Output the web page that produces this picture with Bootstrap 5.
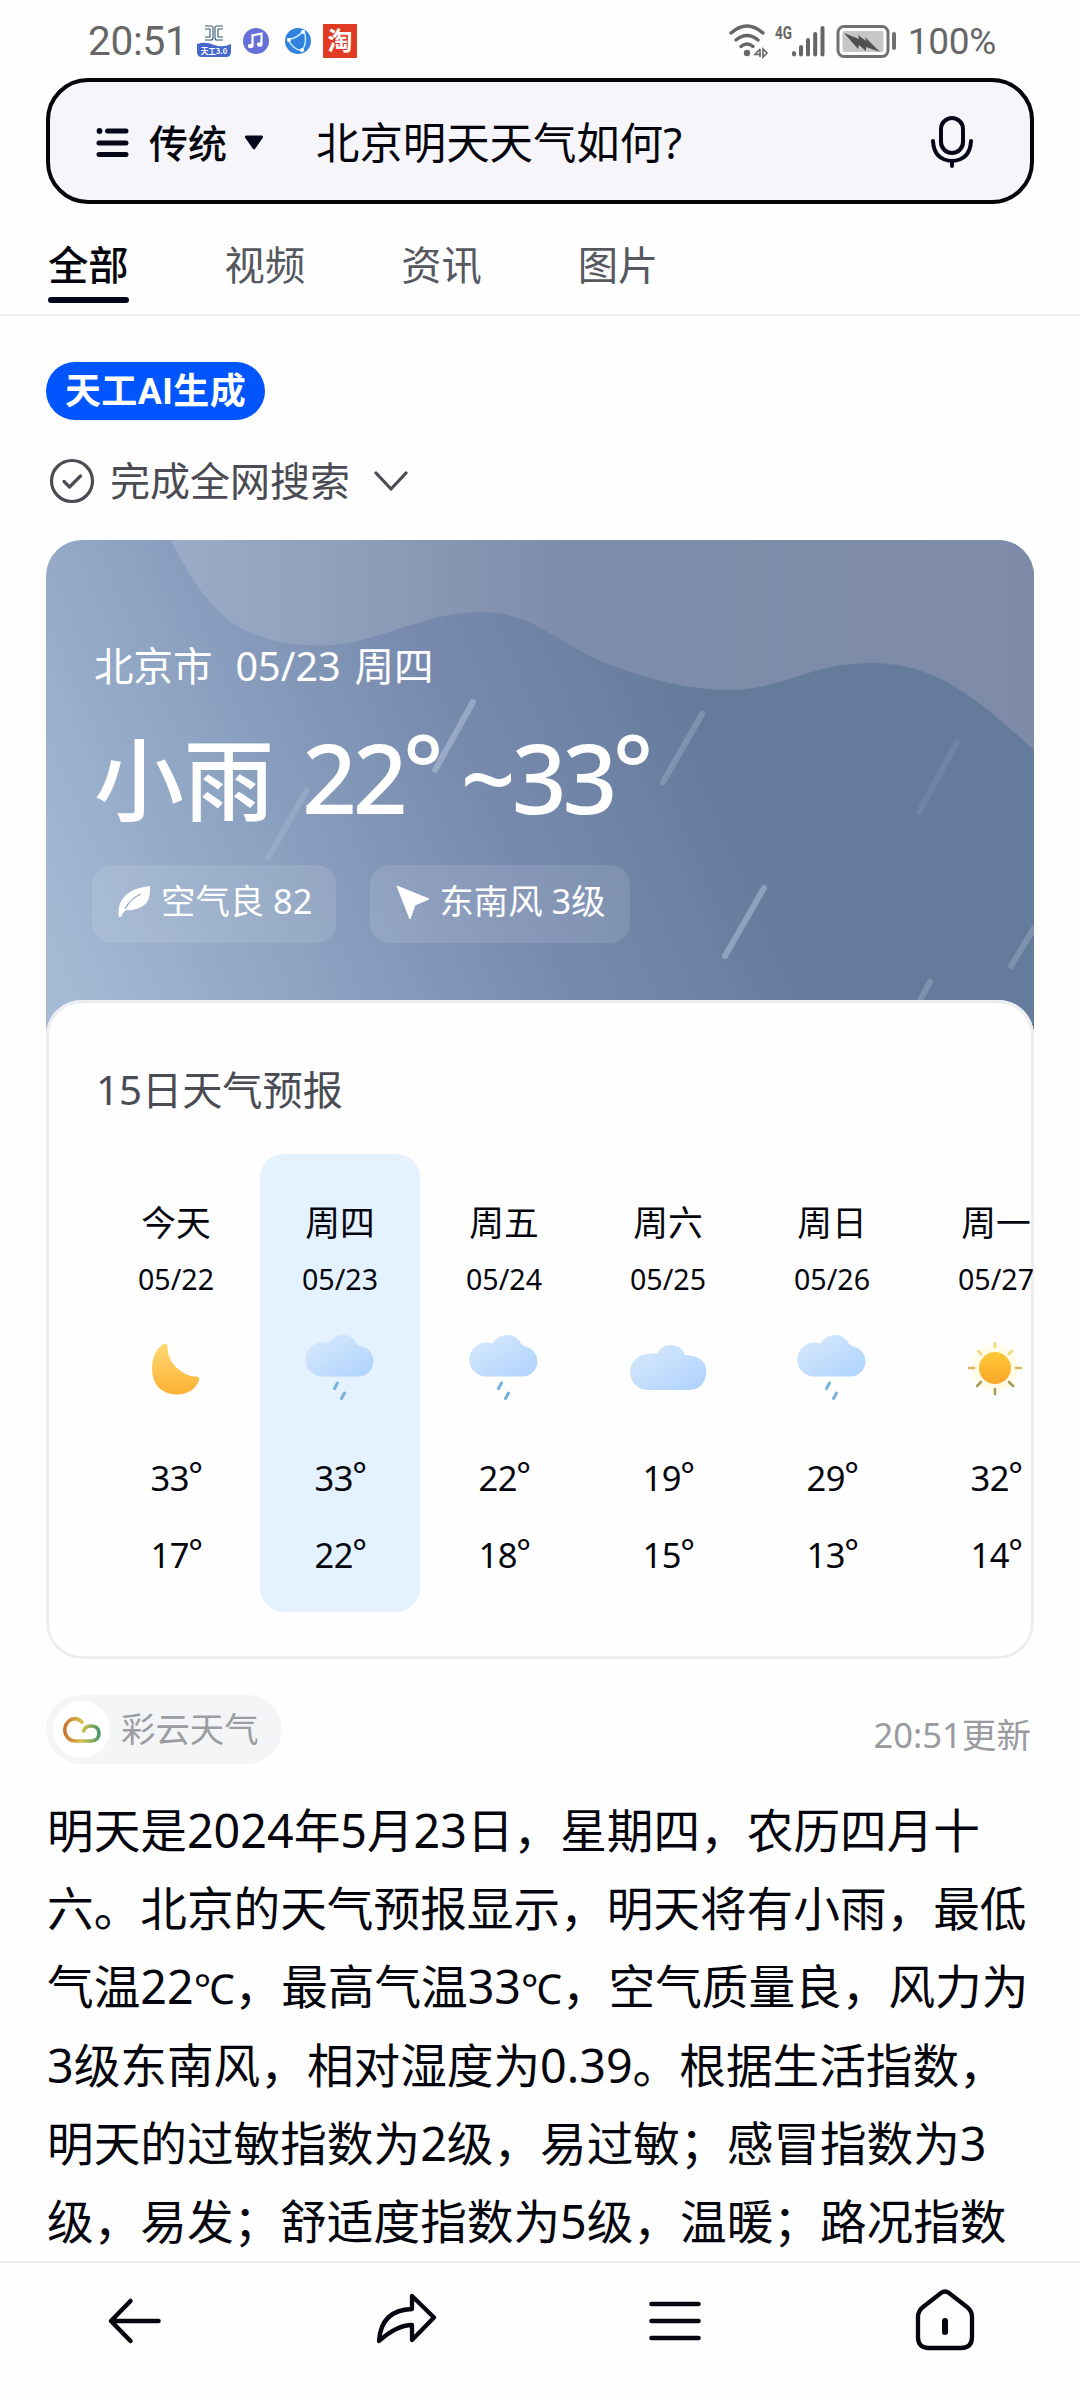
<!DOCTYPE html>
<html lang="zh-CN">
<head>
<meta charset="utf-8">
<meta name="viewport" content="width=device-width, initial-scale=1">
<title>北京明天天气如何?</title>
<link href="https://cdn.jsdelivr.net/npm/bootstrap@5.3.0/dist/css/bootstrap.min.css" rel="stylesheet">
<style>
  body { font-family: "Noto Sans", "Noto Sans CJK SC", sans-serif; background: #fefefe; color: #05060d; line-height: 1; }
  svg { display: block; flex: none; }
  .screen { width: 1080px; height: 2400px; }
  .status-bar { height: 78px; padding: 4px 84px 0 88px; color: #666; font-family: Roboto, "Noto Sans CJK SC", sans-serif; }
  .clock-text { font-size: 40.5px; width: 109px; padding-top: 1px; letter-spacing: -.3px; }
  .battery-text { font-size: 37px; margin-left: 11px; letter-spacing: -.3px; padding-top: 1px; }
  .search-box { height: 126px; margin: 0 46px; padding: 3px 57px 0 46px; border: 4px solid #05050a; border-radius: 42px; background: #f5f5fa; }
  .mode-text { font-size: 39px; font-weight: 500; margin-left: 20px; }
  .query-text { font-size: 43.4px; margin-left: 51px; }
  .tab-bar { height: 112px; padding: 0 48px; border-bottom: 2px solid #efefef; gap: 96px; font-size: 40.3px; color: #55585f; }
  .tab-item { height: 99px; padding: 31px 0 0; line-height: 60px; border-bottom: 6px solid transparent; color: inherit; }
  .tab-item.active { color: #05060d; font-weight: 500; position: relative; }
  .tab-item.active::after { content: ""; position: absolute; left: 0; right: 0; bottom: -6px; height: 6px; border-radius: 3px; background: #04061a; }
  .result { padding: 46px 46px 0; }
  .ai-badge { width: 219px; height: 58px; background: #0055ff; font-family: Roboto, "Noto Sans CJK SC", sans-serif; font-size: 36px; line-height: 61px; font-weight: 700; letter-spacing: .4px; }
  .search-state { height: 44px; margin: 39px 0 37px; font-size: 40px; color: #4a4b53; gap: 14px; padding-left: 2px; }
  .weather { height: 1119px; border-radius: 36px; }
  .sky { position: absolute; left: 0; top: 0; }
  .hero { height: 460px; padding: 101px 48px 0; }
  .hero-place { font-size: 39.5px; line-height: 50px; }
  .hero-place .gap-wide { margin-left: 23px; margin-right: 14px; }
  .hero-temp { font-size: 90px; font-weight: 500; line-height: 110px; height: 112px; margin-top: 31px; white-space: pre; }
  .hero-temp .num { font-size: 96px; letter-spacing: -4px; margin-left: 7px; }
  .hero-temp .o { margin-left: -1px; }
  .chips { margin-top: 31px; margin-left: -2px; gap: 34px; }
  .chip { height: 78px; border-radius: 20px; background: rgba(255,255,255,.11); font-size: 34.4px; padding: 0 24px 6px 25px; }
  .forecast { height: 659px; border-radius: 36px; background: #fefefe; box-shadow: inset 0 0 0 3px #ededef, inset 0 3px 0 #e6eefa; padding-top: 65px; }
  .forecast-title { font-size: 40.2px; line-height: 50px; color: #4a4b53; padding-left: 50px; }
  .days { margin-top: 39px; padding-left: 50px; gap: 4px; }
  .day { width: 160px; height: 458px; flex: none; border-radius: 24px; padding-top: 49px; }
  .day.chosen { background: #e4f1fe; }
  .day-name { font-size: 34.8px; line-height: 40px; }
  .day-date { font-size: 28.6px; line-height: 36px; margin-top: 18px; }
  .day-icon { margin-top: 30px; height: 90px; }
  .deg { font-size: 34.5px; line-height: 40px; margin-top: 41px; padding-left: 1px; letter-spacing: -.4px; }
  .deg + .deg { margin-top: 37px; }
  .o { vertical-align: .1em; line-height: 0; margin-left: -.03em; }
  .source-row { margin-top: 36px; height: 69px; }
  .source { width: 236px; height: 69px; background: #f4f5f7; font-size: 34.4px; color: #9b9da2; padding-left: 7px; }
  .source-logo { width: 57px; height: 57px; background: #fff; margin-right: 11px; }
  .updated { font-size: 34.6px; color: #999ba0; padding-top: 11px; padding-right: 3px; }
  .answer { font-size: 46.65px; line-height: 78.2px; margin: 27px 0 0 1px; white-space: nowrap; }
  .answer i { font-style: normal; font-size: .88em; line-height: 0; }
  .tool-bar { height: 139px; border-top: 2px solid #eee; padding-bottom: 22px; }
</style>
</head>
<body>
<svg width="0" height="0" class="position-absolute">
  <defs>
    <linearGradient id="cloudFill" x1="0" y1="0" x2="1" y2="1"><stop offset="0" stop-color="#d9eafc"/><stop offset="1" stop-color="#add2fd"/></linearGradient>
    <linearGradient id="moonFill" x1="0" y1="0" x2="0" y2="1"><stop offset="0" stop-color="#ffd873"/><stop offset="1" stop-color="#fbb133"/></linearGradient>
    <linearGradient id="sunFill" x1="0" y1="0" x2="0" y2="1"><stop offset="0" stop-color="#fdc935"/><stop offset="1" stop-color="#faa62a"/></linearGradient>
    <symbol id="rainy" viewBox="0 0 80 80">
      <path d="M23 49.500a17 17 0 1 1 5-33q6-8.500 15-8.500 10 0 14.500 9.500 2 1.500 4 2a15.200 15.200 0 0 1-2 30z" fill="url(#cloudFill)"/>
      <path d="M37.500 56l-3 5.500M44.500 66l-3 5.500" stroke="#79b2d8" stroke-width="3" stroke-linecap="round"/>
    </symbol>
    <symbol id="cloudy" viewBox="0 0 80 80">
      <path d="M20 63a18 18 0 0 1 0-36q6-1.500 9 0 4-9 14-9t14 10q23 1 21 19-2 16-18 16z" fill="url(#cloudFill)"/>
    </symbol>
    <symbol id="moon" viewBox="0 0 80 80">
      <path d="M27 17q5-2 4.500 4.500 1 12 8.500 18.500 9 9 19 9.500 5.500 0 4 4.500-6 13-22 13.500-24-1-25-25.500 0-17 11-25z" fill="url(#moonFill)"/>
    </symbol>
    <symbol id="sunny" viewBox="0 0 80 80">
      <circle cx="39" cy="41" r="23" fill="#fffbe6"/>
      <circle cx="39" cy="41" r="16" fill="url(#sunFill)"/>
      <g stroke-width="2.600" stroke-linecap="round"><path d="M39 16v4M22 24l3 3M56 24l-3 3" stroke="#efda7a"/><path d="M13 41h5M60 41h5" stroke="#d9b75e"/><path d="M39 62v5M21 59l4-4M57 59l-4-4" stroke="#a89a58"/></g>
    </symbol>
  </defs>
</svg>

<div class="screen d-flex flex-column overflow-hidden">
  <header class="status-bar d-flex align-items-center">
    <span class="clock-text">20:51</span>
    <svg width="34" height="34" viewBox="0 0 34 34">
      <path d="M0 20q9-3 17 1 9 3 17-1v8q0 5-5 5H5q-5 0-5-5z" fill="#4668cd"/>
      <path d="M8 2h6q2 0 2 2v10q0 2-2 2H8M26 2h-6q-2 0-2 2v10q0 2 2 2h6M8 5h5v8H8M26 5h-5v8h5" fill="none" stroke="#31566f" stroke-width="1.100"/>
      <text x="17" y="30" font-size="7.500" font-weight="700" fill="#fff" text-anchor="middle" font-family="Noto Sans CJK SC">天工3.0</text>
    </svg>
    <svg class="ms-2" width="34" height="34" viewBox="0 0 34 34"><circle cx="17" cy="17" r="13" fill="#6670d6"/><path d="M13.500 22V11.500l9-2V20" fill="none" stroke="#fff" stroke-width="2.200"/><ellipse cx="11.700" cy="22" rx="2.800" ry="2.200" fill="#fff"/><ellipse cx="20.700" cy="20.500" rx="2.800" ry="2.200" fill="#fff"/></svg>
    <svg class="ms-2" width="34" height="34" viewBox="0 0 34 34"><circle cx="17" cy="17" r="13" fill="#2f83dd"/><path d="M6 15q9 1 17-9M8 17q4 8 13 10M23 7q4 10-2 20" fill="none" stroke="#c8e9ff" stroke-width="1.500"/><circle cx="8" cy="16" r="2" fill="#fff"/><circle cx="22" cy="8" r="2" fill="#fff"/><circle cx="21" cy="26" r="2" fill="#fff"/></svg>
    <svg class="ms-2 overflow-visible" width="34" height="34" viewBox="0 0 34 34"><rect width="34" height="34" fill="#e23b24"/><text x="17" y="26" font-size="25" font-weight="700" fill="#fff" text-anchor="middle" font-family="Noto Sans CJK SC">淘</text></svg>
    <div class="ms-auto d-flex align-items-center">
      <svg width="168" height="36" viewBox="0 0 168 36">
        <g fill="none" stroke="#666" stroke-width="3.400" stroke-linecap="round"><path d="M2 10q16-14 32 0M7 17q11-9 22 0M12 23.500q6-5 12 0"/></g>
        <circle cx="18" cy="30" r="3.200" fill="#666"/><path d="M31 26v8M31 26l-5 5.500h6M34 26v8l4-4z" fill="none" stroke="#666" stroke-width="1.600"/>
        <text x="46" y="16" font-size="18" font-weight="700" textLength="17" lengthAdjust="spacingAndGlyphs" fill="#666" font-family="Roboto">4G</text>
        <g stroke="#666" stroke-width="4" stroke-linecap="round"><path d="M65 30v1.500M72 24v7.500M79 17v14.500M86.200 11v20.500M93.500 5v26.500"/></g>
        <rect x="109" y="3.500" width="50" height="30" rx="6" fill="none" stroke="#707070" stroke-width="3"/><rect x="113.500" y="8" width="41" height="21" rx="2" fill="#c6c6c6"/>
        <path d="M115 10l15 6-1-4 8 6-1-4 15 15-14-5v4l-7-6-1 4z" fill="#505050"/><path d="M165 11v14" stroke="#707070" stroke-width="4" stroke-linecap="round"/>
      </svg>
      <span class="battery-text">100%</span>
    </div>
  </header>

  <div class="search-box d-flex align-items-center">
    <svg width="33" height="32" viewBox="0 0 33 32"><path d="M11.500 4H30M3 16h27M3 27.500h27" stroke="#05061a" stroke-width="5" stroke-linecap="round"/><circle cx="3.500" cy="4" r="2.900" fill="#05061a"/></svg>
    <span class="mode-text">传统</span>
    <svg class="ms-3" width="22" height="18" viewBox="0 0 20 16"><path d="M3 2.500h14l-7 10z" fill="#05061a" stroke="#05061a" stroke-width="2.500" stroke-linejoin="round"/></svg>
    <span class="query-text">北京明天天气如何?</span>
    <svg class="ms-auto" width="42" height="54" viewBox="0 0 42 54" fill="none" stroke="#05061a" stroke-width="4" stroke-linecap="round"><rect x="10" y="2" width="22" height="35" rx="11"/><path d="M2 25q1 19 19 20 18-1 19-20M21 45v5"/></svg>
  </div>

  <nav class="tab-bar d-flex">
    <a class="tab-item active text-decoration-none">全部</a>
    <a class="tab-item text-decoration-none">视频</a>
    <a class="tab-item text-decoration-none">资讯</a>
    <a class="tab-item text-decoration-none">图片</a>
  </nav>

  <main class="result flex-grow-1 overflow-hidden">
    <div class="ai-badge rounded-pill text-white text-center">天工AI生成</div>

    <div class="search-state d-flex align-items-center">
      <svg width="48" height="48" viewBox="0 0 48 48" fill="none" stroke="#4a4b53" stroke-width="3.200" stroke-linecap="round" stroke-linejoin="round"><circle cx="24" cy="24" r="20.500"/><path d="M16 24.500l5.500 5.500 11-11"/></svg>
      <span>完成全网搜索</span>
      <svg class="ms-2" width="36" height="24" viewBox="0 0 36 24" fill="none" stroke="#4a4b53" stroke-width="3.200" stroke-linecap="round" stroke-linejoin="round"><path d="M4 4l15 16L34 4"/></svg>
    </div>

    <section class="weather position-relative overflow-hidden">
      <svg class="sky" width="988" height="500" viewBox="0 0 988 500">
        <defs>
          <linearGradient id="skyFill" gradientUnits="userSpaceOnUse" x1="0" y1="420" x2="650" y2="140"><stop offset="0" stop-color="#a6bad6"/><stop offset=".3" stop-color="#8fa5c3"/><stop offset=".65" stop-color="#788baf"/><stop offset="1" stop-color="#657b9b"/></linearGradient>
          <linearGradient id="hillFill" x1="0" y1="0" x2="1" y2="0"><stop offset="0" stop-color="#9bacc8"/><stop offset=".45" stop-color="#7e8dab"/><stop offset="1" stop-color="#7d8ba9"/></linearGradient>
        </defs>
        <rect width="988" height="500" fill="url(#skyFill)"/>
        <path d="M125 0C142 34 165 72 195 88C225 105 275 110 312 101C355 90 392 72 437 72C490 72 515 108 570 127C620 146 675 155 713 147C755 138 778 123 826 123C885 123 925 152 988 210V0Z" fill="url(#hillFill)"/>
        <g stroke="#b7c7df" stroke-width="6" stroke-linecap="round">
          <path d="M427 162l-38 68" opacity=".5"/><path d="M261 250l-39 68" opacity=".28"/><path d="M656 174l-39 68" opacity=".3"/><path d="M911 202l-38 70" opacity=".13"/><path d="M718 348l-39 68" opacity=".48"/><path d="M988 388l-23 38" opacity=".3"/><path d="M884 442l-14 26" opacity=".3"/>
        </g>
      </svg>
      <div class="hero position-relative text-white">
        <div class="hero-place">北京市<span class="gap-wide">05/23</span>周四</div>
        <div class="hero-temp">小雨<span class="num"> 22<span class="o">°</span> ~33<span class="o">°</span></span></div>
        <div class="chips d-flex">
          <div class="chip d-flex align-items-center">
            <svg class="me-2" width="36" height="36" viewBox="0 0 36 36"><path d="M2 34C0 18 8 6 33 3q1 15-7 20-8 5-17 4-4 3-5 7z" fill="#fff"/><path d="M8 26q6-11 16-15" stroke="#94a8c5" stroke-width="1.200" fill="none"/></svg>空气良 82
          </div>
          <div class="chip d-flex align-items-center">
            <svg class="me-2" width="36" height="38" viewBox="0 0 36 38"><path d="M2 4l32 13-14 6-5 14z" fill="#fff" stroke="#fff" stroke-linejoin="round"/></svg>东南风 3级
          </div>
        </div>
      </div>
      <div class="forecast position-relative">
        <div class="forecast-title">15日天气预报</div>
        <div class="days d-flex text-center">
          <div class="day"><div class="day-name">今天</div><div class="day-date">05/22</div><div class="day-icon d-flex justify-content-center"><svg width="80" height="80"><use href="#moon"/></svg></div><div class="deg">33<span class="o">°</span></div><div class="deg">17<span class="o">°</span></div></div>
          <div class="day chosen"><div class="day-name">周四</div><div class="day-date">05/23</div><div class="day-icon d-flex justify-content-center"><svg width="80" height="80"><use href="#rainy"/></svg></div><div class="deg">33<span class="o">°</span></div><div class="deg">22<span class="o">°</span></div></div>
          <div class="day"><div class="day-name">周五</div><div class="day-date">05/24</div><div class="day-icon d-flex justify-content-center"><svg width="80" height="80"><use href="#rainy"/></svg></div><div class="deg">22<span class="o">°</span></div><div class="deg">18<span class="o">°</span></div></div>
          <div class="day"><div class="day-name">周六</div><div class="day-date">05/25</div><div class="day-icon d-flex justify-content-center"><svg width="80" height="80"><use href="#cloudy"/></svg></div><div class="deg">19<span class="o">°</span></div><div class="deg">15<span class="o">°</span></div></div>
          <div class="day"><div class="day-name">周日</div><div class="day-date">05/26</div><div class="day-icon d-flex justify-content-center"><svg width="80" height="80"><use href="#rainy"/></svg></div><div class="deg">29<span class="o">°</span></div><div class="deg">13<span class="o">°</span></div></div>
          <div class="day"><div class="day-name">周一</div><div class="day-date">05/27</div><div class="day-icon d-flex justify-content-center"><svg width="80" height="80"><use href="#sunny"/></svg></div><div class="deg">32<span class="o">°</span></div><div class="deg">14<span class="o">°</span></div></div>
        </div>
      </div>
    </section>

    <div class="source-row d-flex justify-content-between align-items-center">
      <div class="source rounded-pill d-flex align-items-center">
        <span class="source-logo rounded-circle d-flex align-items-center justify-content-center">
          <svg width="38" height="28" viewBox="0 0 38 28"><defs><linearGradient id="rim" x1="0" y1="0" x2="1" y2="0"><stop offset="0" stop-color="#c9752f"/><stop offset=".5" stop-color="#d9c04a"/><stop offset="1" stop-color="#4d9a6c"/></linearGradient></defs><path d="M19 6Q13 0 6.500 4.500 0 10 2.500 18q3 7 10 7H28q8-.5 8-8-.5-7-8-7-6 0-7.500 5" fill="none" stroke="url(#rim)" stroke-width="3.600" stroke-linecap="round"/></svg>
        </span>彩云天气
      </div>
      <span class="updated">20:51更新</span>
    </div>

    <p class="answer">明天是2024年5月23日，星期四，农历四月十<br>六。北京的天气预报显示，明天将有小雨，最低<br>气温22<i>℃</i>，最高气温33<i>℃</i>，空气质量良，风力为<br>3级东南风，相对湿度为0.39。根据生活指数，<br>明天的过敏指数为2级，易过敏；感冒指数为3<br>级，易发；舒适度指数为5级，温暖；路况指数</p>
  </main>

  <footer class="tool-bar">
    <div class="row g-0 h-100 align-items-center">
      <div class="col d-flex justify-content-center"><svg width="60" height="64" viewBox="0 0 60 64" fill="none" stroke="#05060f" stroke-width="4.500" stroke-linecap="round" stroke-linejoin="round"><path d="M25.500 12L6 32l19.500 20M7 32h46.500"/></svg></div>
      <div class="col d-flex justify-content-center"><svg width="64" height="64" viewBox="0 0 64 64" fill="none" stroke="#05060f" stroke-width="4.300" stroke-linecap="round" stroke-linejoin="round"><path d="M39 7l22 21.500L39 51V36Q24 36 6 52 8 21 39 20z"/></svg></div>
      <div class="col d-flex justify-content-center"><svg width="60" height="64" viewBox="0 0 60 64" stroke="#05060f" stroke-width="4.600" stroke-linecap="round"><path d="M6.500 15h47M6.500 32h47M6.500 49h47"/></svg></div>
      <div class="col d-flex justify-content-center"><svg width="64" height="68" viewBox="0 0 64 68" fill="none" stroke="#05060f" stroke-linecap="round" stroke-linejoin="round"><path d="M28 6q4-3 8 0l18 14q5 4 5 10v20q0 11-11 11H16Q5 61 5 50V30q0-6 5-10z" stroke-width="4.300"/><path d="M32 34v11" stroke-width="6"/></svg></div>
    </div>
  </footer>
</div>
<script src="https://cdn.jsdelivr.net/npm/bootstrap@5.3.0/dist/js/bootstrap.bundle.min.js"></script>
</body>
</html>
